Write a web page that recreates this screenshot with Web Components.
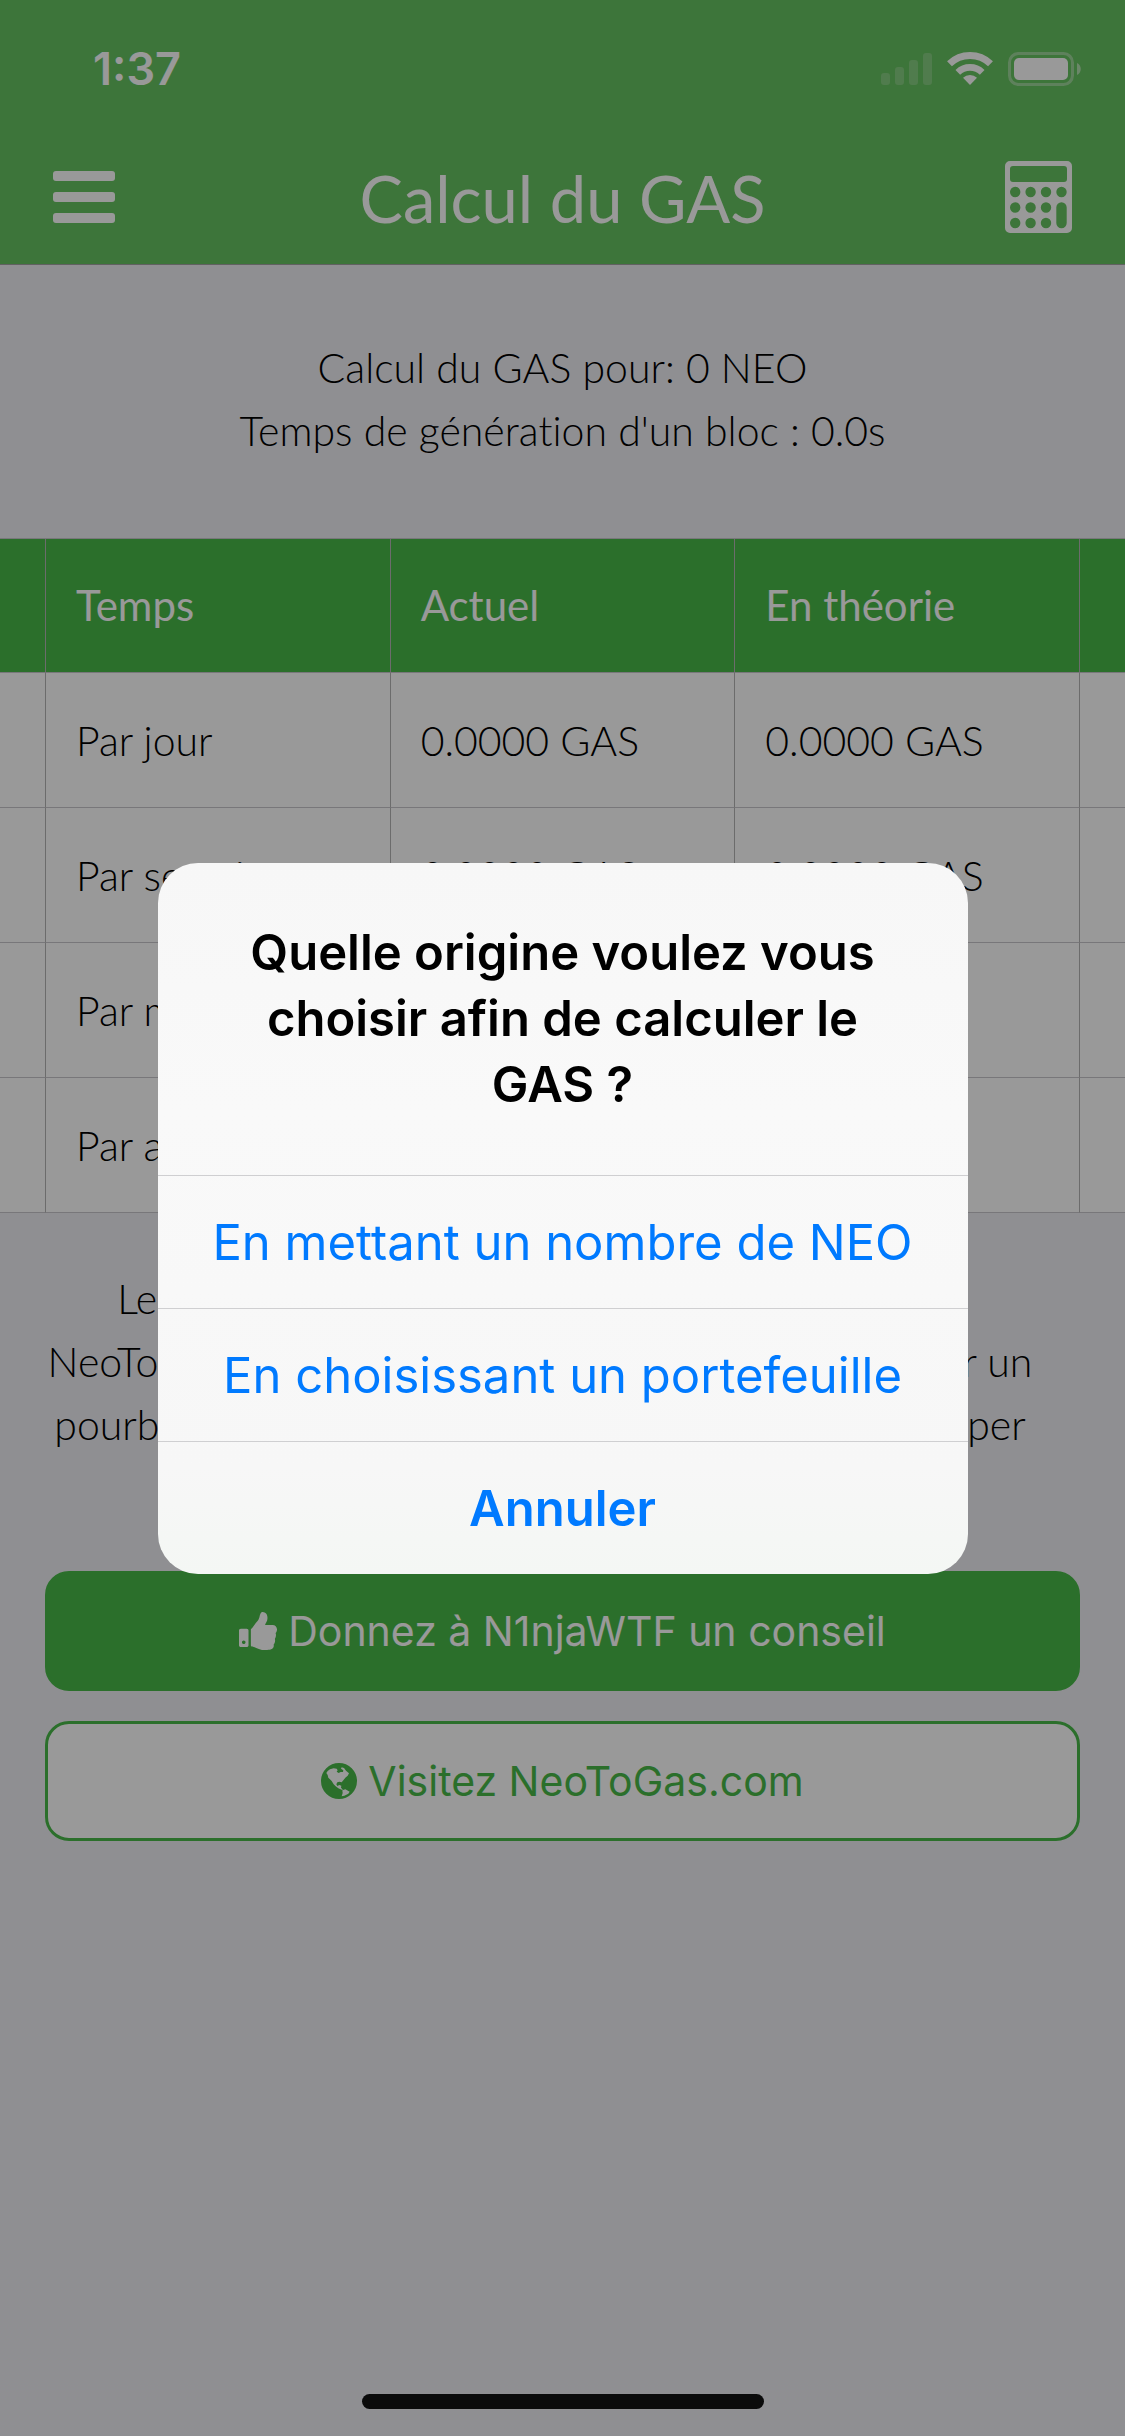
<!DOCTYPE html>
<html lang="fr">
<head>
<meta charset="utf-8">
<meta name="viewport" content="width=device-width, initial-scale=1">
<title>Calcul du GAS</title>
<style>
  html, body { margin: 0; }
  body {
    min-height: 100vh;
    background: #efeff4;
    color: #000;
    font-family: Lato, "Open Sans", sans-serif;
    font-size: 41px;
    line-height: 63px;
    font-variant-ligatures: none;
    --bar: #67c361;
    --brand: #49b949;
    --rule: #c8c7cc;
    --column-rule: #b4b4b4;
    --ui-font: Inter, "Liberation Sans", sans-serif;
  }
</style>
</head>
<body>
<gas-app>
  <status-bar slot="top" time="1:37"></status-bar>
  <nav-bar slot="top">Calcul du GAS</nav-bar>
  <text-block>Calcul du GAS pour: 0 NEO<br>Temps de génération d'un bloc : 0.0s</text-block>
  <gas-table></gas-table>
  <text-block class="note">Les données affichées ici proviennent du site de<br>NeoToGas.com et merci de bien vouloir leur accorder un<br>pourboire afin de nous aider à continuer de développer</text-block>
  <action-list>
    <action-button kind="filled">
      <svg slot="icon" width="38" height="38" viewBox="0 0 512 512" fill="currentColor" aria-hidden="true"><path d="M104 224H24c-13.255 0-24 10.745-24 24v200c0 13.255 10.745 24 24 24h80c13.255 0 24-10.745 24-24V248c0-13.255-10.745-24-24-24zM64 432c-13.255 0-24-10.745-24-24s10.745-24 24-24 24 10.745 24 24-10.745 24-24 24zM384 81.452c0 42.416-25.97 66.208-33.277 94.548h101.723c33.397 0 59.397 27.746 59.553 58.098.084 17.938-7.546 37.249-19.439 49.197l-.11.11c9.836 23.337 8.237 56.037-9.308 79.469 8.681 25.895-.069 57.704-16.382 74.757 4.298 17.598 2.244 32.575-6.148 44.632C440.202 511.587 389.616 512 346.839 512l-2.845-.001c-48.287-.017-87.806-17.598-119.56-31.725-15.957-7.099-36.821-15.887-52.651-16.178-6.54-.12-11.783-5.457-11.783-11.998v-213.77c0-3.2 1.282-6.271 3.558-8.521 39.614-39.144 56.648-80.587 89.117-113.111 14.804-14.832 20.188-37.236 25.393-58.902C282.515 39.293 291.817 0 312 0c24 0 72 8 72 81.452z"/></svg>
      Donnez à N1njaWTF un conseil
    </action-button>
    <action-button href="#neotogas">
      <svg slot="icon" width="36" height="36" viewBox="0 0 108 108" aria-hidden="true"><path fill="currentColor" fill-rule="evenodd" d="M54 0a54 54 0 1 0 0 108a54 54 0 1 0 0-108zM16 30L20 24L27 19L38 16L47 17L50 22L47 26L53 30L59 27L66 27L67 22L60 17L62 13L69 15L75 23L84 31L80 38L73 44L67 52L62 58L55 56L49 58L46 64L49 69L55 66L61 68L60 74L66 80L62 80L52 76L44 70L38 64L32 54L22 44L20 36zM64 82L73 79L86 86L82 92L70 98L62 100L65 90z"/></svg>
      Visitez NeoToGas.com
    </action-button>
  </action-list>
</gas-app>
<alert-dialog>
  <span slot="title">Quelle origine voulez vous choisir afin de calculer le GAS ?</span>
  <alert-action>En mettant un nombre de NEO</alert-action>
  <alert-action>En choisissant un portefeuille</alert-action>
  <alert-action strong>Annuler</alert-action>
</alert-dialog>
<home-indicator></home-indicator>

<script>
const define = (name, markup) => {
  customElements.define(name, class extends HTMLElement {
    constructor() {
      super();
      const root = this.attachShadow({ mode: 'open' });
      root.innerHTML = typeof markup === 'function' ? markup(this) : markup;
    }
  });
};

define('gas-app', `
  <style>
    :host { display: block; }
    header { background: var(--bar); border-bottom: 1px solid #a2a2a2; }
  </style>
  <header><slot name="top"></slot></header>
  <main><slot></slot></main>`);

define('status-bar', host => `
  <style>
    :host { display: flex; justify-content: space-between; align-items: center; height: 132px; padding: 6px 44px 0 93px; box-sizing: border-box; color: #fff; font: 600 45px/54px var(--ui-font); }
    .icons { display: flex; align-items: center; gap: 15px; }
    svg { display: block; }
  </style>
  <span>${host.getAttribute('time')}</span>
  <div class="icons">
    <svg width="51" height="34" viewBox="0 0 51 34" fill="#fff" fill-opacity=".2" aria-hidden="true">
      <rect y="21" width="9" height="12" rx="3"/><rect x="14" y="15" width="9" height="18" rx="3"/><rect x="28" y="8" width="9" height="25" rx="3"/><rect x="42" y="1" width="9" height="32" rx="3"/>
    </svg>
    <svg width="46" height="34" viewBox="0 0 46 34" fill="none" stroke="#fff" aria-hidden="true">
      <path stroke-width="7" d="M2.5 11.8A29.5 29.5 0 0 1 43.5 11.8"/><path stroke-width="6.7" d="M10.8 20.3A17.6 17.6 0 0 1 35.2 20.3"/><path fill="#fff" stroke="none" d="M23 33L16 25.8A10 10 0 0 1 30 25.8z"/>
    </svg>
    <svg width="73" height="34" viewBox="0 0 73 34" fill="#fff" aria-hidden="true">
      <rect x="1.5" y="1.5" width="63" height="31" rx="9" fill="none" stroke="#fff" stroke-width="3" stroke-opacity=".36"/><rect x="6" y="6" width="54" height="22" rx="5"/><path fill-opacity=".5" d="M69 11c5 2 5 10 0 12z"/>
    </svg>
  </div>`);

define('nav-bar', `
  <style>
    :host { display: flex; justify-content: space-between; align-items: center; height: 132px; padding: 0 53px; box-sizing: border-box; color: #fff; font-weight: 400; font-size: 65px; line-height: 78px; }
    h1 { margin: 0; font: inherit; }
    button { display: flex; width: 67px; padding: 0 0 2px; border: 0; background: none; color: inherit; }
    button:last-child { justify-content: flex-end; }
    svg { display: block; }
  </style>
  <button type="button" aria-label="Menu">
    <svg width="62" height="52" viewBox="0 0 62 52" fill="currentColor"><rect width="62" height="10" rx="3"/><rect y="21" width="62" height="10" rx="3"/><rect y="42" width="62" height="10" rx="3"/></svg>
  </button>
  <h1><slot></slot></h1>
  <button type="button" aria-label="Calculer">
    <svg width="67" height="72" viewBox="0 0 67 72" fill="currentColor"><path fill-rule="evenodd" d="M5 0H62a5 5 0 0 1 5 5V67a5 5 0 0 1-5 5H5a5 5 0 0 1-5-5V5a5 5 0 0 1 5-5z
      M8 5a3 3 0 0 0-3 3V18a3 3 0 0 0 3 3H59a3 3 0 0 0 3-3V8a3 3 0 0 0-3-3z
      M5 31a5.2 5.2 0 1 0 10.4 0a5.2 5.2 0 1 0-10.4 0z M20.4 31a5.2 5.2 0 1 0 10.4 0a5.2 5.2 0 1 0-10.4 0z M35.8 31a5.2 5.2 0 1 0 10.4 0a5.2 5.2 0 1 0-10.4 0z M51.3 31a5.2 5.2 0 1 0 10.4 0a5.2 5.2 0 1 0-10.4 0z
      M5 46.5a5.2 5.2 0 1 0 10.4 0a5.2 5.2 0 1 0-10.4 0z M20.4 46.5a5.2 5.2 0 1 0 10.4 0a5.2 5.2 0 1 0-10.4 0z M35.8 46.5a5.2 5.2 0 1 0 10.4 0a5.2 5.2 0 1 0-10.4 0z
      M5 62a5.2 5.2 0 1 0 10.4 0a5.2 5.2 0 1 0-10.4 0z M20.4 62a5.2 5.2 0 1 0 10.4 0a5.2 5.2 0 1 0-10.4 0z M35.8 62a5.2 5.2 0 1 0 10.4 0a5.2 5.2 0 1 0-10.4 0z
      M51.3 46.5a5.2 5.2 0 0 1 10.4 0V62a5.2 5.2 0 0 1-10.4 0z"/></svg>
  </button>`);

define('text-block', `
  <style>
    :host { display: block; padding: 71px 45px 76px; text-align: center; font-weight: 300; }
    :host(.note) { padding: 54px 90px 115px 45px; }
    p { margin: 0; white-space: nowrap; }
  </style>
  <p><slot></slot></p>`);

define('gas-table', () => {
  const rows = [['Par jour', '0.0000 GAS'], ['Par semaine', '0.0000 GAS'], ['Par mois', '0.000 GAS'], ['Par an', '0.000 GAS']];
  const row = ([label, value]) => `<tr><td></td><td>${label}</td><td>${value}</td><td>${value}</td><td></td></tr>`;
  return `
  <style>
    :host { display: block; }
    table { width: 100%; table-layout: fixed; border-collapse: separate; border-spacing: 0; border-top: 1px solid var(--rule); background: #fff; }
    .edge { width: 45px; }
    .edge:last-child { width: 46px; }
    th, td { box-sizing: border-box; height: 135px; padding: 0 0 0 30px; border-bottom: 1px solid var(--rule); text-align: left; font-weight: 300; white-space: nowrap; }
    th { height: 134px; background: var(--brand); color: #fff; font-size: 42px; font-weight: 400; }
    :is(th, td):first-child, :is(th, td):last-child { padding: 0; }
    :is(th, td) + :is(th, td) { border-left: 1px solid var(--column-rule); }
  </style>
  <table>
    <colgroup><col class="edge"><col><col><col><col class="edge"></colgroup>
    <thead><tr><th></th><th scope="col">Temps</th><th scope="col">Actuel</th><th scope="col">En théorie</th><th></th></tr></thead>
    <tbody>${rows.map(row).join('')}</tbody>
  </table>`;
});

define('action-list', `
  <style>:host { display: flex; flex-direction: column; gap: 30px; padding: 0 45px; }</style>
  <slot></slot>`);

define('action-button', host => {
  const href = host.getAttribute('href');
  const tag = href ? 'a' : 'button';
  return `
  <style>
    :host { display: block; }
    .box { display: flex; justify-content: center; align-items: center; gap: 11px; width: 100%; height: 120px; box-sizing: border-box; border: 3px solid var(--brand); border-radius: 24px; background: #fff; color: var(--brand); font: 400 41px/50px var(--ui-font); text-decoration: none; }
    :host([kind="filled"]) .box { background: var(--brand); color: #fff; }
    ::slotted(svg) { display: block; }
  </style>
  <${tag} class="box" ${href ? `href="${href}"` : 'type="button"'}><slot name="icon"></slot><span><slot></slot></span></${tag}>`;
});

define('alert-dialog', `
  <style>
    :host { position: fixed; inset: 0; display: flex; align-items: center; justify-content: center; background: rgba(0, 0, 0, .4); font: 400 49px/66px var(--ui-font); }
    section { width: 810px; max-width: 90%; border-radius: 40px; overflow: hidden; background: linear-gradient(#f7f7f7, #f9f9f9 35%, #f7f7f7 85%, #f4f7f4); }
    h2 { margin: 0; padding: 57px 78px; font: inherit; font-weight: 600; text-align: center; color: #000; }
  </style>
  <section role="alertdialog" aria-modal="true" aria-labelledby="title">
    <h2 id="title"><slot name="title"></slot></h2>
    <slot></slot>
  </section>`);

define('alert-action', `
  <style>
    :host { display: block; border-top: 1px solid #cfcfd1; }
    button { display: block; width: 100%; height: 132px; padding: 3px 0 0; border: 0; background: none; color: #007aff; font: inherit; }
    :host([strong]) button { font-weight: 600; }
  </style>
  <button type="button"><slot></slot></button>`);

define('home-indicator', `
  <style>
    :host { position: fixed; inset: auto 0 27px; display: flex; justify-content: center; }
    div { width: 402px; height: 15px; border-radius: 8px; background: #0b0b0b; }
  </style>
  <div></div>`);
</script>
</body>
</html>
